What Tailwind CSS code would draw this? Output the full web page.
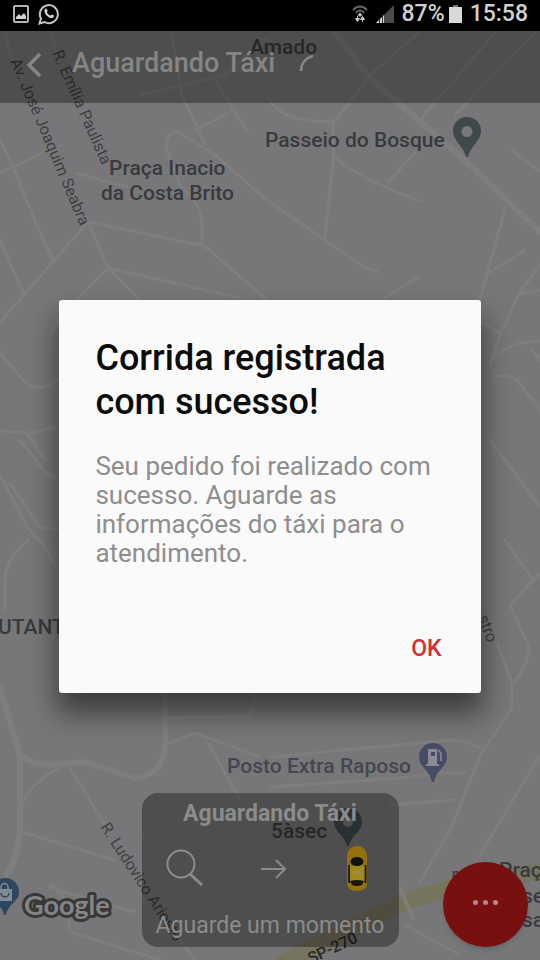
<!DOCTYPE html>
<html lang="pt-BR">
<head>
  <meta charset="UTF-8" />
  <meta name="viewport" content="width=device-width, initial-scale=1" />
  <title>Aguardando Táxi</title>
  <script src="https://cdn.jsdelivr.net/npm/@tailwindcss/browser@4"></script>
</head>
<body class="relative min-h-screen flex flex-col overflow-hidden bg-[#777779] font-['Roboto',sans-serif]">

  <!-- map -->
  <svg class="absolute inset-0 w-full h-full" viewBox="0 0 540 960" preserveAspectRatio="xMidYMid slice" aria-label="Mapa">
    <g fill="none" stroke="#7e7e7e" stroke-width="3" stroke-linejoin="round" stroke-linecap="round">
      <path d="M0 140 13 167 40 233 54 262M0 173 13 167 45 152M5 35 12 60M52 35 58 60M76 173 127 187" />
      <path d="M172 35 182 95 205 145M167 152Q164 132 178 132L215 155 267 200 325 240 365 268 377 271" />
      <path d="M140 95 225 75 267 38M215 80 247 131M195 130 230 112M167 150 180 185Q202 205 202 225V247" />
      <path d="M88 222 200 245 207 248 265 298M88 222 0 322M88 222 108 268 140 300M108 268 75 302M108 268 240 298M0 240 23 292M35 222 53 260" />
      <path d="M0 353 25 382Q38 395 60 378M0 431 30 433 60 426M28 435 45 460M50 335 62 316" />
      <path d="M268 98Q285 125 335 121L370 75 418 33M418 122 495 33M455 115 535 33M333 120V160L325 240M333 155Q350 175 422 202M388 182 415 153M512 150 540 172" />
      <path d="M505 208 495 245 480 300M525 250 490 272M540 265 520 292 500 335 490 365M520 294 540 290M482 323 500 333M490 362Q505 342 540 341M494 376Q515 374 520 384L540 410M532 350 540 362M385 298 418 277" />
      <path d="M20 440 45 472 60 482M0 475 28 528 45 547 55 565M10 483 40 527 58 530M28 540Q5 560 5 580V610M490 440 540 507" />
      <path d="M505 540 533 580 510 605 528 645Q532 660 512 685V708L482 752 450 830 420 882M497 643 512 682M530 582 540 574" />
      <path d="M20 812Q25 785 60 768M70 768 105 825M22 832 115 860M170 743 195 733 260 757M208 743 240 800M165 718 250 716 255 695" />
      <path d="M50 888 135 912M50 885Q68 890 70 932L160 960M180 940 195 960M270 757 440 741Q460 737 480 748M270 787 400 778 440 773 465 773M390 805 455 800M540 755 480 855M405 925 460 955" />
      <path stroke-width="6" d="M335 33 370 78 430 130 470 165 540 232" />
      <path stroke-width="6" d="M0 688 20 755 20 830Q18 860 6 875M20 755Q40 768 60 764L85 762 135 778Q163 775 165 745V695" />
    </g>
    <path d="M278 966C315 945 350 930 385 912 420 893 460 884 540 872" fill="none" stroke="#76745f" stroke-width="17" />
    <path d="M399 886 414 920" stroke="#7f7f78" stroke-width="4" />

    <g fill="#383a3d" font-size="21" font-weight="500">
      <text x="250" y="54">Amado</text>
      <text x="265" y="147">Passeio do Bosque</text>
      <text x="109" y="175">Praça Inacio</text>
      <text x="101" y="200">da Costa Brito</text>
      <text x="-2" y="634">UTANTÃ</text>
      <text x="227" y="773" fill="#454652">Posto Extra Raposo</text>
      <text x="271" y="838">5àsec</text>
      <text x="499" y="877">Praça</text>
      <text x="522" y="903">ses</text>
      <text x="522" y="927">sa</text>
      <text x="452" y="879" font-size="14">n</text>
    </g>
    <g fill="#3f4042" font-size="16">
      <text transform="translate(52 53) rotate(66)">R. Emília Paulista</text>
      <text transform="translate(10 61) rotate(67)">Av. José Joaquim Seabra</text>
      <text transform="translate(100 827) rotate(57)">R. Ludovico Ariosto</text>
      <text transform="translate(478 617) rotate(70)">stro</text>
      <text transform="translate(311 964) rotate(-25)" font-weight="500" fill="#262626">SP-270</text>
    </g>

    <!-- place pins -->
    <path fill="#40484c" fill-rule="evenodd" d="M467 117a14 14 0 0 1 14 14c0 10-10 14-13 26h-2c-3-12-13-16-13-26a14 14 0 0 1 14-14ZM467 126a5 5 0 1 0 0 11 5 5 0 0 0 0-11Z" />
    <path fill="#40484c" fill-rule="evenodd" d="M348 808a14 14 0 0 1 14 14c0 10-10 12-13 24h-2c-3-12-13-14-13-24a14 14 0 0 1 14-14ZM348 817a5 5 0 1 0 0 10 5 5 0 0 0 0-10Z" />
    <path fill="#484b64" d="M433 743a14 14 0 0 1 14 14c0 10-10 12-13 25h-2c-3-13-13-15-13-25a14 14 0 0 1 14-14Z" />
    <path fill="#8a8b94" fill-rule="evenodd" d="M428 749h9v15h2v2h-13v-2h2ZM431 752v4h4v-4Z" />
    <path fill="none" stroke="#8a8b94" stroke-width="1.5" d="M438 750l3 3v8" />
    <path fill="#2c475f" d="M5 878a14 14 0 0 1 14 14c0 10-11 12-13 23H4C2 904-9 902-9 892A14 14 0 0 1 5 878Z" />
    <path fill="#7e8a94" d="M-3 889H12V901H-3Z" />
    <path fill="none" stroke="#7e8a94" stroke-width="1.5" d="M1 890v-3a3.500 3.500 0 0 1 7 0v3" />
    <path fill="none" stroke="#2c475f" stroke-width="1.500" d="M1 893a4 4 0 0 0 8 0" />
    <text x="24" y="915" font-family="Lato, sans-serif" font-size="27" font-weight="700" fill="#858585" stroke="#383838" stroke-width="6" stroke-linejoin="round" paint-order="stroke">Google</text>
  </svg>

  <!-- status bar -->
  <div class="relative flex h-[31px] items-center justify-between bg-black pb-1 pl-3 pr-3 text-[#d0d0d0]">
    <div class="flex items-center gap-2">
      <svg class="h-5 w-[18px]" viewBox="0 0 18 20" aria-hidden="true">
        <rect x="2" y="2" width="14" height="16" rx="1" fill="none" stroke="#b4b4b4" stroke-width="2" />
        <path d="M4 15v-2l3-3 2 2 3-3 2 3v3Z" fill="#d0d0d0" />
      </svg>
      <svg class="h-[22px] w-[22px]" viewBox="0 0 22 22" aria-hidden="true">
        <path d="M1.500 20.500 3 15.500A9 9 0 1 1 6.500 19Z" fill="none" stroke="#c4c4c4" stroke-width="2" />
        <path d="M7 6c1-1 2 0 2.500 1.500.3 1-.8 1.500-.5 2 .8 1.500 2 2.500 3.500 3 .5 0 1-1.300 1.800-1 1.500.6 2.200 1 1.500 2.300-1.200 2-4 1.500-6-.3C7.500 11.700 5.500 8.500 7 6Z" fill="#d0d0d0" />
      </svg>
    </div>
    <div class="flex items-center text-[23px] font-medium leading-none">
      <svg class="mr-2 h-5 w-4" viewBox="0 0 16 20" aria-hidden="true">
        <path d="M1 6Q8-1 15 6M3.500 9Q8 4 12.500 9" fill="none" stroke="#666" stroke-width="1.800" />
        <path d="M5.500 11 8 8.500l2.500 2.500L8 13Z" fill="#bbb" />
        <path d="M5.500 12v4M3.500 14.500l2 3 2-3ZM10.500 18v-4M8.500 15.500l2-3 2 3Z" fill="#ccc" stroke="#ccc" stroke-width="1" />
      </svg>
      <svg class="mr-2 h-5 w-[18px]" viewBox="0 0 18 20" aria-hidden="true">
        <path d="M18 1V19H0Z" fill="#4c4c4c" />
        <path d="M8 11v8H0Z" fill="#d0d0d0" />
        <path d="M3.500 13v6M6.500 10v9" stroke="#111" stroke-width=".8" />
      </svg>
      <span>87%</span>
      <svg class="ml-1 mr-2 h-5 w-[13px]" viewBox="0 0 13 20" aria-hidden="true">
        <path d="M4 1h5v2h4v16H0V3h4Z" fill="#d8d8d8" />
        <path d="M4 1h5v2H4Z" fill="#777" />
      </svg>
      <span>15:58</span>
    </div>
  </div>

  <!-- app bar -->
  <header class="relative flex h-[72px] items-center bg-black/34 px-6 pb-2 text-[#858585]">
    <button type="button" aria-label="Voltar" class="mr-7 mt-1">
      <svg class="h-6 w-5" viewBox="0 0 20 24" aria-hidden="true">
        <path d="M16 1 5 12 16 23" fill="none" stroke="currentColor" stroke-width="3.500" />
      </svg>
    </button>
    <h1 class="text-[27px] font-medium leading-8">Aguardando Táxi</h1>
    <svg class="ml-6 h-6 w-4" viewBox="0 0 16 24" aria-hidden="true">
      <path d="M2 20C2 13 6 7 14 5" fill="none" stroke="currentColor" stroke-width="2.500" />
    </svg>
  </header>

  <!-- ride status -->
  <main class="relative flex flex-1 items-end justify-center pb-[13px]">
    <section class="flex h-[154px] w-[257px] flex-col rounded-2xl bg-black/34 text-center text-[#8b8b8b]">
      <h2 class="h-[43px] border-b border-white/3 text-[23px] font-bold leading-[42px]">Aguardando Táxi</h2>
      <div class="flex flex-1 items-center justify-between border-b border-white/3 pl-6 pr-[30px]">
        <svg class="h-10 w-10" viewBox="0 0 40 40" fill="none" stroke="currentColor" aria-hidden="true">
          <circle cx="15" cy="15" r="13.500" stroke-width="2" />
          <path d="M24 25 36 36" stroke-width="3" />
        </svg>
        <svg class="h-5 w-7" viewBox="0 0 28 20" fill="none" stroke="currentColor" stroke-width="2" aria-hidden="true">
          <path d="M0 10H24M15 1 24 10 15 19" />
        </svg>
        <svg class="h-12 w-6" viewBox="0 0 24 48" aria-hidden="true">
          <path d="M7 2Q12 0 17 2 22 5 22 12V40Q20 46 12 46T2 40V12Q2 5 7 2Z" fill="#96700c" />
          <path d="M5 21H20V36H5Z" fill="#a08a1c" />
          <path d="M4 20V38M20.500 20V38" stroke="#1c1a10" stroke-width="1.800" />
          <ellipse cx="12" cy="16.500" rx="6.500" ry="4.500" fill="#121214" />
          <path d="M5 36Q12 34 19 36L17 40Q12 42 7 40Z" fill="#1a170a" />
          <path d="M9 26H16V29H9Z" fill="#a88a48" />
        </svg>
      </div>
      <p class="h-11 text-[23px] leading-[46px]">Aguarde um momento</p>
    </section>
    <button type="button" aria-label="Mais opções" class="absolute bottom-[13px] right-3 flex h-[85px] w-[85px] items-center justify-center gap-[5px] rounded-full bg-[#781010] pb-1 shadow-md">
      <span class="h-[5px] w-[5px] rounded-full bg-[#b08a8a]"></span>
      <span class="h-[5px] w-[5px] rounded-full bg-[#b08a8a]"></span>
      <span class="h-[5px] w-[5px] rounded-full bg-[#b08a8a]"></span>
    </button>
  </main>

  <!-- dialog -->
  <div class="absolute inset-0 flex items-center px-[11%] pt-[33px]">
    <div role="alertdialog" aria-labelledby="dialog-title" aria-describedby="dialog-text"
      class="w-full rounded-[3px] bg-[#fafafa] px-9 pb-6 pt-9 shadow-[0_18px_28px_2px_rgba(0,0,0,0.5)]">
      <h2 id="dialog-title" class="text-[36px] font-medium leading-[44px] text-[#0c0c0c]">Corrida registrada com sucesso!</h2>
      <p id="dialog-text" class="mt-7 text-[26px] leading-[29px] text-[#8e8e8e]">Seu pedido foi realizado com sucesso. Aguarde as informações do táxi para o atendimento.</p>
      <div class="mt-[61px] flex justify-end">
        <button type="button" id="ok" class="h-10 pr-[3px] text-[23px] font-medium text-[#d32f35]">OK</button>
      </div>
    </div>
  </div>

  <script>
    document.getElementById("ok").addEventListener("click", (e) => {
      e.target.closest("[role=alertdialog]").parentElement.classList.add("hidden");
    });
  </script>
</body>
</html>
